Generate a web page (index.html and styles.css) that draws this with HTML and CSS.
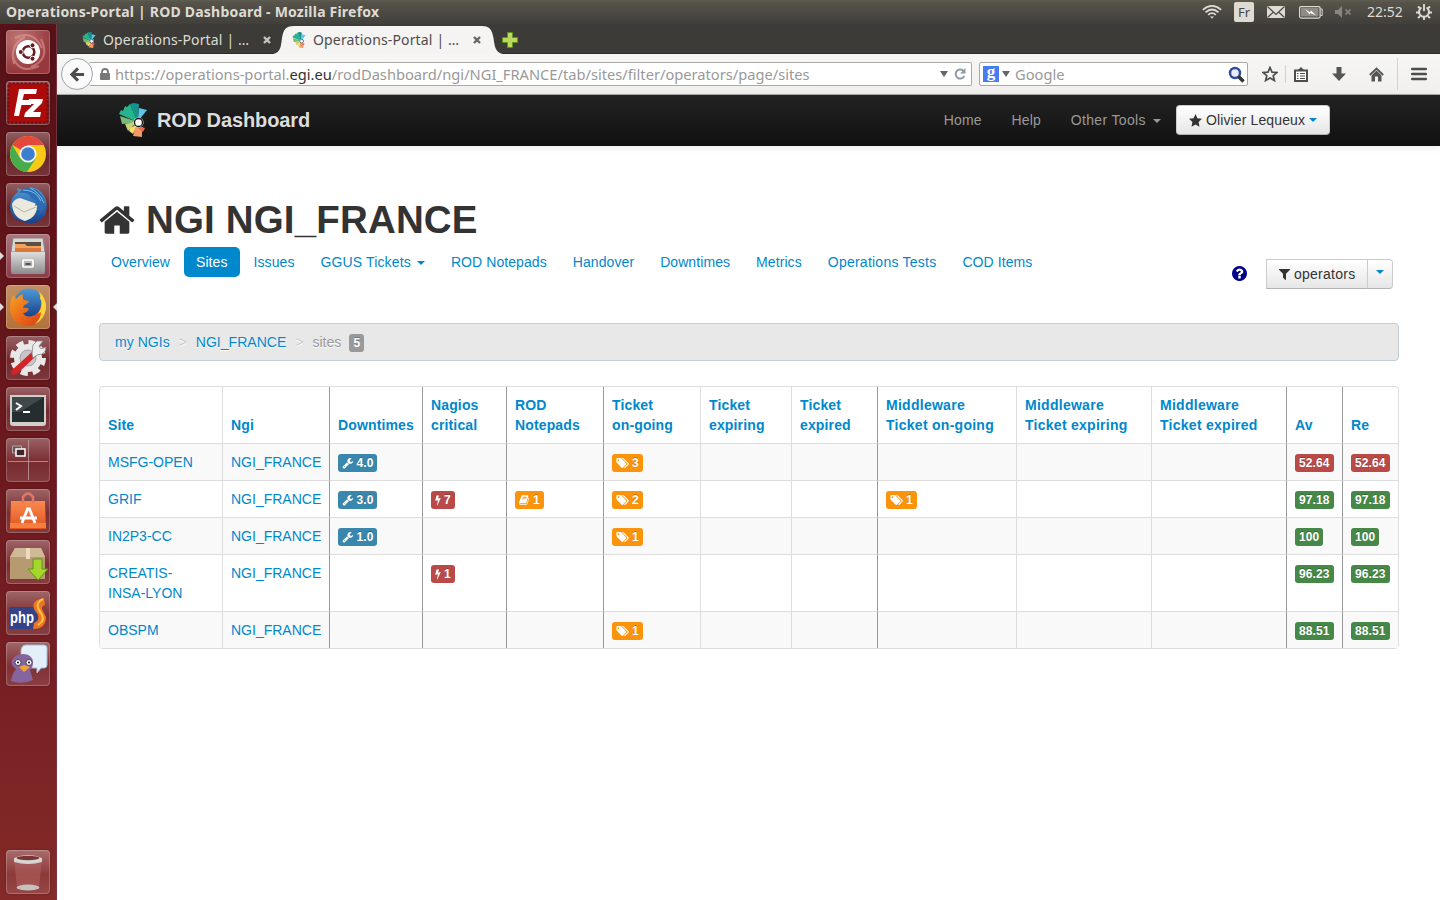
FILE: index.html
```html
<!DOCTYPE html>
<html lang="en">
<head>
<meta charset="utf-8">
<title>Operations-Portal | ROD Dashboard</title>
<link rel="stylesheet" href="styles.css">
</head>
<body>
<svg class="defs" aria-hidden="true">
  <symbol id="wrench" viewBox="0 0 1792 1792"><path d="M448 1472q0-26-19-45t-45-19-45 19-19 45 19 45 45 19 45-19 19-45zm644-420l-682 682q-37 37-90 37-52 0-91-37l-106-108q-38-36-38-90 0-53 38-91l681-681q39 98 114.5 173.5t173.5 114.5zm634-435q0 39-23 106-47 134-164.5 217.5t-258.5 83.5q-185 0-316.5-131.5t-131.5-316.5 131.5-316.5 316.5-131.5q58 0 121.5 16.5t107.5 46.5q16 11 16 28t-16 28l-293 169v224l193 107q5-3 79-48.5t135.5-81 70.5-35.5q15 0 23.5 10t8.5 25z"/></symbol>
  <symbol id="bolt" viewBox="400 0 1000 1792"><path d="M1333 566q18 20 7 44l-540 1157q-13 25-42 25-4 0-14-2-17-5-25.5-19t-4.5-30l197-808-406 101q-4 1-12 1-18 0-31-11-18-15-13-39l201-825q4-14 16-23t28-9h328q19 0 32 12.500t13 29.500q0 8-5 18l-171 463 396-98q8-2 12-2 19 0 34 15z"/></symbol>
  <symbol id="book" viewBox="0 0 1792 1792"><path d="M1639 478q40 57 18 129l-275 906q-19 64-76.500 107.500t-122.500 43.500h-923q-77 0-148.500-53.500t-99.500-131.500q-24-67-2-127 0-4 3-27t4-37q1-8-3-21.500t-3-19.500q2-11 8-21t16.500-23.500 16.500-23.500q23-38 45-91.500t30-91.500q3-10 .5-30t-.5-28q3-11 17-28t17-23q21-36 42-92t25-90q1-9-2.500-32t.5-28q4-13 22-30.500t22-22.500q19-26 42.500-84.500t27.500-96.500q1-8-3-25.500t-2-26.500q2-8 9-18t18-23 17-21q8-12 16.500-30.500t15-35 16-36 19.500-32 26.500-23.500 36-11.500 47.500 5.500l-1 3q38-9 51-9h761q74 0 114 56t18 130l-274 906q-36 119-71.500 153.500t-128.500 34.500h-869q-27 0-38 15-11 16-1 43 24 70 144 70h923q29 0 56-15.500t35-41.500l300-987q7-22 5-57 38 15 59 43zm-1064 2q-4 13 2 22.500t20 9.500h608q13 0 25.500-9.500t16.500-22.500l21-64q4-13-2-22.500t-20-9.500h-608q-13 0-25.500 9.500t-16.500 22.500zm-83 256q-4 13 2 22.500t20 9.500h608q13 0 25.500-9.500t16.500-22.500l21-64q4-13-2-22.500t-20-9.500h-608q-13 0-25.500 9.500t-16.500 22.500z"/></symbol>
  <symbol id="tags" viewBox="64 0 1984 1792"><path d="M576 448q0-53-37.500-90.500t-90.500-37.500-90.500 37.500-37.500 90.500 37.500 90.500 90.500 37.500 90.500-37.500 37.500-90.500zm1067 576q0 53-37 90l-491 492q-39 37-91 37-53 0-90-37l-715-716q-38-37-64.500-101t-26.500-117v-416q0-52 38-90t90-38h416q53 0 117 26.500t102 64.500l715 714q37 39 37 91zm384 0q0 53-37 90l-491 492q-39 37-91 37-36 0-59-14t-53-45l470-470q37-37 37-90 0-52-37-91l-715-714q-38-38-102-64.500t-117-26.500h224q53 0 117 26.500t102 64.500l715 714q37 39 37 91z"/></symbol>
  <symbol id="home" viewBox="64 200 1664 1400"><path d="M1472 992v480q0 26-19 45t-45 19h-384v-384h-256v384h-384q-26 0-45-19t-19-45v-480q0-1 .5-3t.5-3l575-474 575 474q1 2 1 6zm223-69l-62 74q-8 9-21 11h-3q-13 0-21-7l-692-577-692 577q-12 8-24 7-13-2-21-11l-62-74q-8-10-7-23.500t11-21.500l719-599q32-26 76-26t76 26l244 204v-195q0-14 9-23t23-9h192q14 0 23 9t9 23v408l219 182q10 8 11 21.500t-7 23.500z"/></symbol>
  <symbol id="help" viewBox="128 128 1536 1536"><path d="M1024 1376v-192q0-14-9-23t-23-9h-192q-14 0-23 9t-9 23v192q0 14 9 23t23 9h192q14 0 23-9t9-23zm256-672q0-88-55.500-163t-138.500-116-170-41q-243 0-371 213-15 24 8 42l132 100q7 6 19 6 16 0 25-12 53-68 86-92 34-24 86-24 48 0 85.500 26t37.500 59q0 38-20 61t-68 45q-63 28-115.500 86.500t-52.500 125.500v36q0 14 9 23t23 9h192q14 0 23-9t9-23q0-19 21.500-49.500t54.500-49.500q32-18 49-28.500t46-35 44.500-48 28-60.500 12.500-81zm384 192q0 209-103 385.500t-279.500 279.500-385.500 103-385.500-103-279.500-279.500-103-385.500 103-385.500 279.500-279.500 385.500-103 385.500 103 279.500 279.500 103 385.500z"/></symbol>
  <symbol id="filter" viewBox="190 250 1412 1420"><path d="M1595 295q17 41-14 70l-493 493v742q0 42-39 59-13 5-25 5-27 0-45-19l-256-256q-19-19-19-45v-486l-493-493q-31-29-14-70 17-39 59-39h1280q42 0 59 39z"/></symbol>
  <symbol id="egi" viewBox="0 0 28 34">
    <path fill="#25b48c" d="M18 19L0 11 2 7 4 8 6 3 8 4 11 1 17 15z"/>
    <path fill="#12958d" d="M11 1L15 0 20 1 19 16 17 16z"/>
    <path fill="#5cc6e4" d="M20 5L28 7 20 17 19 16z"/>
    <path fill="#79b77b" d="M1 13L16 18 16 20 3 21z"/>
    <path fill="#c5d376" d="M6 21L16 19 16 21 9 28z"/>
    <path fill="#f3dc68" d="M10 28L11 25 17 22 17 25 14 31z"/>
    <path fill="#f39a67" d="M14 33L17 23 23 27 23 34z"/>
    <path fill="#ef6a4c" d="M20 23L26 25 24 29 19 25z"/>
    <circle cx="19.500" cy="19.500" r="5" fill="#fff"/><circle cx="19.500" cy="19.500" r="4" fill="#fff" stroke="#111" stroke-width="1.300"/>
  </symbol>
  <linearGradient id="metal" x1="0" y1="0" x2="0" y2="1"><stop offset="0" stop-color="#ddd"/><stop offset="1" stop-color="#8c8c8c"/></linearGradient>
  <linearGradient id="flame" x1="0" y1="0" x2="1" y2="1"><stop offset="0" stop-color="#f6a421"/><stop offset=".5" stop-color="#ec6a1c"/><stop offset="1" stop-color="#d23a14"/></linearGradient>
  <linearGradient id="bird" x1="0" y1="0" x2="0" y2="1"><stop offset="0" stop-color="#4d9ad6"/><stop offset="1" stop-color="#173f88"/></linearGradient>
  <linearGradient id="bag" x1="0" y1="0" x2="0" y2="1"><stop offset="0" stop-color="#f98a50"/><stop offset="1" stop-color="#e2531c"/></linearGradient>
</svg>

<div class="desktop">
  <header class="panel">
    <span class="panel-title">Operations-Portal | ROD Dashboard - Mozilla Firefox</span>
    <div class="indicators">
      <svg width="20" height="14" viewBox="0 0 20 14" fill="none" stroke="#dfdbd2" stroke-width="1.700"><path d="M.8 4.800Q10-3 19.200 4.800M3.500 7.400Q10 1.600 16.500 7.400M6.200 9.900Q10 6.400 13.800 9.900"/><path d="M8 11.500h4l-2 2.300z" fill="#dfdbd2" stroke="none"/></svg>
      <span class="kbd">Fr</span>
      <svg class="mail" width="18" height="12" viewBox="0 0 18 12"><path fill="#dfdbd2" d="M0 0h18v12H0z"/><path d="M.5.500L9 8.500 17.500.500M.5 11.500L6.500 6M17.500 11.500L11.500 6" fill="none" stroke="#4a4842" stroke-width="1.200"/></svg>
      <svg class="batt" width="24" height="13" viewBox="0 0 24 13"><rect x=".6" y=".6" width="20.500" height="11.500" rx="1.500" fill="none" stroke="#dfdbd2" stroke-width="1.200"/><path fill="#8d8b84" d="M2 2h17.500v8.500H2z"/><path d="M21.500 3h1.700v6.500h-1.700" fill="none" stroke="#dfdbd2"/><path fill="#fff" d="M6 3l5 3.500 1-2 5 5-5.500-2.500-1 1.500z"/></svg>
      <svg class="snd" width="17" height="12" viewBox="0 0 17 12"><path fill="#88867f" d="M0 4h3l4-4v12L3 8H0z"/><path d="M10.500 3.500l5 5m0-5l-5 5" stroke="#88867f" stroke-width="1.700"/></svg>
      <span class="clock">22:52</span>
      <svg width="16" height="16" viewBox="0 0 16 16" fill="none" stroke="#dfdbd2"><path stroke-width="2" d="M5.500 3.500a5 5 0 1 0 5 0"/><path stroke-width="1.900" d="M8 0v7M2 2.500l2 1.700M14 2.500l-2 1.700M0 8.500h3M16 8.500h-3M2 14l2-1.700M14 14l-2-1.700M8 16v-3"/></svg>
    </div>
  </header>

  <div class="workspace">
    <nav class="launcher">
      <div class="tile ubuntu"><svg viewBox="0 0 44 44"><path d="M9 8Q27-1 36 18M35 9q10 20-10 28M33 36Q12 45 7 26M8 34Q3 15 19 7" fill="none" stroke="#e7a8a4" stroke-width="2" opacity=".5"/><circle cx="22" cy="22" r="12" fill="#fff"/><circle cx="22.500" cy="22" r="5.800" fill="none" stroke="#671d22" stroke-width="2.600"/><g fill="#671d22" stroke="#fff" stroke-width="1"><circle cx="14.800" cy="22" r="2.500"/><circle cx="26.500" cy="15.300" r="2.500"/><circle cx="26.500" cy="28.700" r="2.500"/></g></svg></div>
      <div class="tile"><svg viewBox="0 0 44 44"><rect x="2.500" y="2.500" width="39" height="39" fill="#ad0a0a" stroke="#7c0b0d" stroke-width="2" stroke-dasharray="2.500 1.500"/><path d="M8 35L13 8h18l-1 5H18l-1.500 6H26l-1 5h-9.500L13 35zM23 18h14l-1 4-9 9h8l-1 5H18l1-4 9-9h-6z" fill="#fff"/></svg></div>
      <div class="tile"><svg viewBox="0 0 44 44"><circle cx="22" cy="22" r="18" fill="#f8c916"/><path d="M22 22L6.400 13A18 18 0 0 1 37.600 13H22z" fill="#e4483c"/><path d="M6.400 13A18 18 0 0 0 21 40L29.800 26.500 14.200 26.500z" fill="#47ad4c"/><circle cx="22" cy="22" r="8.600" fill="#f4f4f4"/><circle cx="22" cy="22" r="6.800" fill="#3c7fd0"/></svg></div>
      <div class="tile"><svg viewBox="0 0 44 44"><path d="M12 9l-1-4 6 2q10-6 18 2 9 9 4 23-7 10-17 8Q5 38 4 24 5 13 12 9z" fill="url(#bird)"/><path d="M6 21q2-5 8-6l17 6q1 13-12 17Q7 35 6 21z" fill="#ece9df"/><path d="M8 23l10 6 12-5" fill="none" stroke="#b6b1a5"/><path d="M13 10q10-1 12 5l5 3-1 5 5-2-2 6 3 1-3 5q7-6 6-16-5-13-16-12-6 0-9 5z" fill="#2b6db5"/><path d="M17 7q13 0 18 11M24 5q9 4 14 15" fill="none" stroke="#80bbe5"/></svg></div>
      <div class="tile files"><span class="run"></span><svg viewBox="0 0 44 44"><path d="M7 4h30l2 14H5z" fill="#d7d7d4" stroke="#878784"/><path d="M9 8h26v10H9z" fill="#5a4e45"/><path d="M9 10h10l2 2h14v7H9z" fill="#f1a15d"/><path d="M9 14h26v5H9z" fill="#dc7837"/><path d="M5 18h34v20q0 2-2 2H7q-2 0-2-2z" fill="url(#metal)"/><rect x="17" y="26" width="10" height="7" rx="1" fill="none" stroke="#fff" stroke-width="1.700"/><path d="M19.500 29h5v2h-5z" fill="#555"/></svg></div>
      <div class="tile fox"><span class="run"></span><svg viewBox="0 0 44 44"><circle cx="23" cy="18" r="14.500" fill="url(#bird)"/><path d="M7 10l3 4q3-4 7-5-1 4 1 6l5 1q-1 3-5 4l-1 3q3-1 6 1-2 4-6 4 3 5 9 3 8-2 9-11 1-6-2-11l5 4 1 10q-2 17-17 18Q5 40 4 24 4 15 7 10z" fill="url(#flame)"/><path d="M32 6q9 7 8 18-2 11-11 15 6-6 6-12l-3 2q5-8 3-14l-1-1q1-4-2-8z" fill="#fbd43a"/></svg><span class="active"></span></div>
      <div class="tile"><svg viewBox="0 0 44 44"><circle cx="22" cy="22" r="15.500" fill="none" stroke="#e8e8e8" stroke-width="5" stroke-dasharray="7.200 4.973"/><circle cx="22" cy="22" r="11" fill="none" stroke="#e8e8e8" stroke-width="6"/><circle cx="22" cy="22" r="8" fill="#c6c6c8" stroke="#aaa"/><path d="M26 16L6 34q-2 4 1 5l4-1 19-18z" fill="#d3242a"/><path d="M26 18l1-9 4-4 6 0-4 5 2 3 5-2q0 5-4 7l-5 1-4 3z" fill="#eee" stroke="#888" stroke-width=".8"/></svg></div>
      <div class="tile"><svg viewBox="0 0 44 44"><path d="M4 8h36v28q0 3-3 3H7q-3 0-3-3z" fill="#cfcfcb"/><path d="M6 10h32v25H6z" fill="#252d2e"/><path d="M6 10h32L14 25H6z" fill="#414849"/><path d="M10 16l5 3-5 4M17 25h7" fill="none" stroke="#fff" stroke-width="2"/></svg></div>
      <div class="tile spaces"><svg viewBox="0 0 44 44"><path d="M22.500 2v40M2 23.500h40" stroke="#c29c9f" stroke-width=".8"/><path d="M6.500 8h9v7h-9z" fill="#715057" stroke="#aaa"/><path d="M10 11h9v7h-9z" fill="#3f242b" stroke="#fff" stroke-width="1.500"/></svg></div>
      <div class="tile"><svg viewBox="0 0 44 44"><path d="M5 12h34l1 28H4z" fill="url(#bag)"/><path d="M4 34h36v5H4z" fill="#f57d3e"/><path d="M17 14V8q5-7 10 0v6" fill="none" stroke="#de7966" stroke-width="2.500"/><path d="M16 34l5.500-14h2L29 34M14 29h17" fill="none" stroke="#fff" stroke-width="2.800"/></svg></div>
      <div class="tile"><svg viewBox="0 0 44 44"><path d="M4 17L9 8h26l4 9v22H4z" fill="#b69a70"/><path d="M4 17L9 8h26l4 9z" fill="#d0b996"/><path d="M20 8h4v11h-4z" fill="#eadbc1"/><path d="M27 19h9v10h6L32 40 22 29h5z" fill="#a4d62c" stroke="#5d9613"/></svg></div>
      <div class="tile"><svg viewBox="0 0 44 44"><path d="M3 16h28v22H3z" fill="#344287"/><path d="M38 7l-7 2q-5 3-3 9l4 6q2 5-4 8l-1 6q13 0 13-12l-3-6q-3-5 2-6z" fill="#f07522"/><path d="M37 8q-7 3-5 9l4 7q3 6-4 10" fill="none" stroke="#ffc047" stroke-width="2"/><text x="4" y="32" textLength="24" lengthAdjust="spacingAndGlyphs" class="php">php</text></svg></div>
      <div class="tile"><svg viewBox="0 0 44 44"><path d="M20 3h18q3 0 3 3v17q0 3-3 3h-3l-4 5v-5H21q-5 0-6-4V8q1-5 5-5z" fill="#e3f0f9" stroke="#9fc1dc"/><path d="M5 39q1-7 5-12-6-4-4-9 3-6 11-6 9 0 10 8 0 6-3 8l3 10q-11 5-22 1z" fill="#86649d"/><g fill="#fff" stroke="#503b66"><circle cx="12" cy="20.500" r="3"/><circle cx="23" cy="20.500" r="3"/></g><circle cx="12" cy="20.500" r="1"/><circle cx="23" cy="20.500" r="1"/><path d="M13 25l5-2 6 2-6 5z" fill="#f1a32a"/></svg></div>
      <div class="tile trash"><svg viewBox="0 0 44 44"><path d="M8 8h28l-3 30q-11 4-22 0z" fill="#b56666" opacity=".5"/><path d="M8 8q14-6 28 0v4q-14 4-28 0z" fill="#d6d5d2"/><ellipse cx="22" cy="8" rx="11.500" ry="2.200" fill="#793235"/><ellipse cx="22" cy="37.500" rx="11.500" ry="3" fill="#c5c2bf"/></svg></div>
    </nav>

    <section class="browser">
      <div class="tabs">
        <div class="tab"><svg class="fav"><use href="#egi"/></svg><span class="tab-label">Operations-Portal | …</span><svg class="close" viewBox="0 0 8 8"><path d="M1 1l6 6m0-6L1 7"/></svg></div>
        <div class="tab current"><svg class="tab-shape" viewBox="0 0 230 29"><path d="M0 29C8 28 8 20 9 13 10.500 5 12 1 21 1H209C217 1 219 5 220.500 13 221.500 20 222 28 230 29z" fill="#f5f4f2"/></svg><svg class="fav"><use href="#egi"/></svg><span class="tab-label">Operations-Portal | …</span><svg class="close" viewBox="0 0 8 8"><path d="M1 1l6 6m0-6L1 7"/></svg></div>
        <svg class="plus" viewBox="0 0 16 16"><path d="M5.500.500h5v5h5v5h-5v5h-5v-5h-5v-5h5z" fill="#bcd85a" stroke="#60901f"/></svg>
      </div>

      <div class="toolbar">
        <div class="back"><svg viewBox="0 0 16 16"><path d="M8.500 1.500L2 8l6.500 6.500M2.500 8H15" fill="none" stroke="#4d4d4d" stroke-width="3.200"/></svg></div>
        <div class="urlbar">
          <svg class="lock" viewBox="0 0 10 12"><path d="M2 6V4q0-3 3-3t3 3v2" fill="none" stroke="#777" stroke-width="1.800"/><rect y="5" width="10" height="7" rx="1" fill="#777"/></svg>
          <span class="url">https://operations-portal.<b>egi.eu</b>/rodDashboard/ngi/NGI_FRANCE/tab/sites/filter/operators/page/sites</span>
          <span class="tri"></span>
          <svg class="reload" viewBox="0 0 12 12"><path d="M9.500 3A4.500 4.500 0 1 0 10.300 8" fill="none" stroke="#8e9aa6" stroke-width="2"/><path d="M11.500 0v5.500H6z" fill="#8e9aa6"/></svg>
        </div>
        <div class="search"><span class="g">g</span><span class="tri"></span><span class="ph">Google</span>
          <svg viewBox="0 0 17 17"><circle cx="7" cy="7" r="5" fill="#e5eef9" stroke="#354a98" stroke-width="2.500"/><path d="M10.500 10.500l5 5" stroke="#333" stroke-width="3.500"/></svg></div>
        <div class="tools">
          <svg width="16" height="16" viewBox="0 0 16 16"><path d="M8 1.500l2 4.600 4.900.4-3.700 3.200 1.200 4.800L8 11.900l-4.400 2.600 1.200-4.800L1.100 6.500 6 6.100z" fill="none" stroke="#4d4d4d" stroke-width="1.700"/></svg>
          <i class="sep"></i>
          <svg width="14" height="15" viewBox="0 0 14 15"><path d="M1 3.500h12v10.500H1z" fill="#fff" stroke="#4d4d4d" stroke-width="2"/><path d="M4 3l3-3 3 3z" fill="#4d4d4d"/><path d="M3 6.500h1.500M6 6.500h5M3 9h1.500M6 9h5M3 11.500h1.500M6 11.500h5" stroke="#4d4d4d" stroke-width="1.100"/></svg>
          <svg width="14" height="14" viewBox="0 0 14 14"><path d="M4.500 0h5v6.500H14L7 14 0 6.500h4.500z" fill="#555"/></svg>
          <svg width="15" height="15" viewBox="0 0 15 15"><path d="M.8 8L7.500 1.500 14.200 8" fill="none" stroke="#555" stroke-width="1.800"/><path d="M2.500 8.500l5-5 5 5V14.500H9V9.500H6v5H2.500z" fill="#555"/></svg>
          <i class="sep long"></i>
          <svg width="16" height="14" viewBox="0 0 16 14"><path d="M1.200 2h13.600M1.200 7h13.600M1.200 12h13.600" stroke="#4d4d4d" stroke-width="2.600" stroke-linecap="round"/></svg>
        </div>
      </div>

      <div class="navbar">
        <svg class="logo"><use href="#egi"/></svg><span class="brand">ROD Dashboard</span>
        <div class="nav-right">
          <a>Home</a><a>Help</a><a>Other Tools <i class="caret"></i></a>
          <span class="btn user"><svg viewBox="0 0 13 13"><path d="M6.500 0l1.900 4.300 4.600.5-3.400 3.200.9 4.700-4-2.300-4 2.300.9-4.700L0 4.800l4.600-.5z"/></svg>Olivier Lequeux <i class="caret"></i></span>
        </div>
      </div>

      <main class="page">
        <h1><svg><use href="#home"/></svg>NGI NGI_FRANCE</h1>
        <div class="subnav">
          <ul class="pills"><li>Overview</li><li class="on">Sites</li><li>Issues</li><li class="drop">GGUS Tickets <i class="caret"></i></li><li>ROD Notepads</li><li>Handover</li><li>Downtimes</li><li>Metrics</li><li class="wide">Operations Tests</li><li>COD Items</li></ul>
          <div class="filters"><svg class="help"><use href="#help"/></svg><span class="btn ops"><svg><use href="#filter"/></svg>operators</span><span class="btn arrow"><i class="caret"></i></span></div>
        </div>
        <div class="crumbs"><a>my NGIs</a><i>&gt;</i><a>NGI_FRANCE</a><i>&gt;</i><span>sites</span><b class="badge gray">5</b></div>

        <table>
          <colgroup><col class="c1"><col class="c2"><col class="c3"><col class="c4"><col class="c5"><col class="c5"><col class="c7"><col class="c8"><col class="c9"><col class="c10"><col class="c10"><col class="c12"><col class="c12"></colgroup>
          <thead><tr><th>Site</th><th>Ngi</th><th class="d">Downtimes</th><th class="d">Nagios<br>critical</th><th class="d">ROD<br>Notepads</th><th class="d">Ticket<br>on-going</th><th>Ticket<br>expiring</th><th>Ticket<br>expired</th><th class="d mid">Middleware<br>Ticket on-going</th><th class="mid">Middleware<br>Ticket expiring</th><th class="mid">Middleware<br>Ticket expired</th><th class="d">Av</th><th class="d">Re</th></tr></thead>
          <tbody>
          <tr><td>MSFG-OPEN</td><td>NGI_FRANCE</td><td class="d"><b class="badge blue"><svg><use href="#wrench"/></svg>4.0</b></td><td class="d"></td><td class="d"></td><td class="d"><b class="badge orange tag"><svg><use href="#tags"/></svg>3</b></td><td></td><td></td><td class="d"></td><td></td><td></td><td class="d"><b class="badge red">52.64</b></td><td class="d"><b class="badge red">52.64</b></td></tr>
          <tr><td>GRIF</td><td>NGI_FRANCE</td><td class="d"><b class="badge blue"><svg><use href="#wrench"/></svg>3.0</b></td><td class="d"><b class="badge red bolt"><svg><use href="#bolt"/></svg>7</b></td><td class="d"><b class="badge orange note"><svg><use href="#book"/></svg>1</b></td><td class="d"><b class="badge orange tag"><svg><use href="#tags"/></svg>2</b></td><td></td><td></td><td class="d"><b class="badge orange tag"><svg><use href="#tags"/></svg>1</b></td><td></td><td></td><td class="d"><b class="badge green">97.18</b></td><td class="d"><b class="badge green">97.18</b></td></tr>
          <tr><td>IN2P3-CC</td><td>NGI_FRANCE</td><td class="d"><b class="badge blue"><svg><use href="#wrench"/></svg>1.0</b></td><td class="d"></td><td class="d"></td><td class="d"><b class="badge orange tag"><svg><use href="#tags"/></svg>1</b></td><td></td><td></td><td class="d"></td><td></td><td></td><td class="d"><b class="badge green">100</b></td><td class="d"><b class="badge green">100</b></td></tr>
          <tr><td>CREATIS-<br>INSA-LYON</td><td>NGI_FRANCE</td><td class="d"></td><td class="d"><b class="badge red bolt"><svg><use href="#bolt"/></svg>1</b></td><td class="d"></td><td class="d"></td><td></td><td></td><td class="d"></td><td></td><td></td><td class="d"><b class="badge green">96.23</b></td><td class="d"><b class="badge green">96.23</b></td></tr>
          <tr><td>OBSPM</td><td>NGI_FRANCE</td><td class="d"></td><td class="d"></td><td class="d"></td><td class="d"><b class="badge orange tag"><svg><use href="#tags"/></svg>1</b></td><td></td><td></td><td class="d"></td><td></td><td></td><td class="d"><b class="badge green">88.51</b></td><td class="d"><b class="badge green">88.51</b></td></tr>
          </tbody>
        </table>
      </main>
    </section>
  </div>
</div>
</body>
</html>
```
FILE: styles.css
```css
* { box-sizing: border-box; }
body { margin: 0; overflow: hidden; font: 14px/20px "Liberation Sans", Arial, sans-serif; color: #333; }
svg { display: block; flex: none; }
.defs { position: absolute; width: 0; height: 0; }
.desktop { width: 1440px; height: 900px; display: flex; flex-direction: column; background: #fff; }
.panel, .tabs, .toolbar { font-family: "Noto Sans", "Open Sans", sans-serif; white-space: nowrap; }

/* Top panel */
.panel { height: 24px; display: flex; align-items: center; justify-content: space-between; padding: 0 8px 0 6px; background: linear-gradient(#5f5c52, #56534a 10%, #403f3a); color: #dfdbd2; }
.panel-title { font-weight: 700; font-size: 14px; letter-spacing: 0.21px; }
.indicators { display: flex; align-items: center; }
.kbd { width: 20px; height: 20px; margin: 0 13px 0 12px; border-radius: 2px; background: #dfdbd2; color: #45443f; text-align: center; font-size: 13px; line-height: 21px; }
.batt { margin-left: 14px; }
.snd { margin-left: 12px; }
.clock { width: 38px; margin: 0 11px 0 15px; font-size: 14px; }

/* Launcher */
.workspace { flex: 1; display: flex; min-height: 0; }
.launcher { width: 57px; padding: 6px 0 6px 6px; display: flex; flex-direction: column; gap: 7px; background: linear-gradient(#551218, #611419 25%, #771f23 75%, #842a28); border-right: 1px solid #793640; }
.tile { position: relative; width: 44px; height: 44px; flex: none; border-radius: 4px; background: linear-gradient(rgba(255,255,255,.32), rgba(255,255,255,.08) 55%, rgba(255,255,255,.14)); box-shadow: inset 0 0 0 1px rgba(255,255,255,.22), 0 0 2px rgba(20,0,0,.4); }
.ubuntu { background: radial-gradient(circle at 30% 20%, #bf7775, #97393c 70%); }
.files { background: linear-gradient(#ae767f, #8a3a47); }
.fox { background: linear-gradient(#c19064, #b2713c); }
.trash { margin-top: auto; }
.run, .active { position: absolute; top: 18px; border: 4px solid transparent; }
.run { left: -6px; border-left-color: #ddd; border-right: 0; }
.active { right: -7px; border-right-color: #ddd; border-left: 0; }
.php { font: bold 17px "Liberation Sans", sans-serif; fill: #fff; }

/* Browser chrome */
.browser { flex: 1; display: flex; flex-direction: column; min-width: 0; }
.tabs { height: 30px; display: flex; background: #3c3b37; border-bottom: 1px solid #2c2b28; color: #dfdbd2; }
.tab { position: relative; width: 210px; height: 30px; flex: none; display: flex; align-items: center; padding: 2px 0 0 25px; }
.fav { width: 14px; height: 16px; margin-right: 7px; position: relative; }
.tab-label { width: 147px; flex: none; margin-right: 13px; font-size: 14px; letter-spacing: .15px; position: relative; }
.close { width: 8px; height: 8px; stroke: #c9c6be; stroke-width: 2.4; position: relative; }
.current { color: #4c4c4c; }
.current .close { stroke: #666; }
.tab-shape { position: absolute; left: 6px; top: 1px; width: 230px; height: 29px; }
.plus { width: 16px; height: 16px; margin: 8px 0 0 25px; }
.toolbar { height: 41px; display: flex; align-items: center; padding-left: 4px; background: linear-gradient(#f6f6f5, #f1f0ee); border-bottom: 1px solid #aaa; font-size: 14.67px; }
.back { width: 32px; height: 32px; border: 1px solid #9ba3ad; border-radius: 50%; background: #fafafa; display: grid; place-items: center; z-index: 1; }
.back svg { width: 15px; height: 15px; }
.urlbar { width: 883px; height: 24px; margin-left: -4px; padding-left: 11px; border: 1px solid #aaa9a4; border-left: 0; border-radius: 2px; background: #fff; display: flex; align-items: center; color: #999; }
.lock { width: 10px; height: 12px; margin-right: 5px; }
.url { width: 825px; }
.url b { font-weight: 400; color: #333; }
.tri { border: 4.500px solid transparent; border-top: 6px solid #666; border-bottom: 0; }
.reload { width: 12px; height: 12px; margin-left: 6px; }
.search { width: 269px; height: 24px; margin-left: 7px; padding: 0 2px 0 3px; border: 1px solid #aaa9a4; border-radius: 2px; background: #fff; display: flex; align-items: center; color: #999; }
.g { width: 16px; height: 16px; margin-right: 3px; background: #467df5; color: #fff; font: bold 17px/11px "Liberation Serif", serif; text-align: center; }
.ph { margin-left: 5px; flex: 1; }
.search svg { width: 17px; height: 17px; }
.tools { flex: 1; display: flex; align-items: center; padding-left: 14px; }
.tools > svg:nth-of-type(3) { margin-left: 24px; }
.tools > svg:nth-of-type(4) { margin-left: 23px; }
.sep { width: 1px; height: 18px; margin: 0 8px 0 7px; background: #ccd2d8; }
.long { height: 32px; margin: 0 13px; }

/* Site header */
.navbar { height: 51px; flex: none; display: flex; align-items: center; padding: 0 110px 1px 62px; background: linear-gradient(#222, #111); box-shadow: 0 1px 8px rgba(0,0,0,.1); color: #999; }
.logo { width: 28px; height: 34px; margin-right: 10px; }
.brand { font-size: 20px; font-weight: 700; letter-spacing: -.1px; color: #ddd; }
.nav-right { margin-left: auto; display: flex; align-items: center; }
.nav-right a { margin-right: 30px; white-space: nowrap; letter-spacing: .1px; }
.nav-right a:nth-of-type(3) { margin-right: 15px; letter-spacing: .33px; }
.nav-right a .caret { margin-left: 3px; }
.caret { display: inline-block; border: 4px solid transparent; border-top-color: currentColor; border-bottom: 0; vertical-align: middle; }
.btn { height: 30px; display: flex; align-items: center; border: 1px solid #ccc; border-bottom-color: #b3b3b3; background: linear-gradient(#fff, #e6e6e6); color: #333; white-space: nowrap; }
.btn .caret { color: #0088cc; }
.user { width: 154px; border-radius: 4px; padding-left: 12px; letter-spacing: .12px; }
.user svg { width: 13px; height: 13px; margin-right: 4px; fill: #333; }
.user .caret { margin-left: 4px; }

/* Content */
.page { padding: 54px 41px 0 42px; }
h1 { height: 40px; margin: 0; display: flex; align-items: center; font-size: 38.500px; line-height: 40px; letter-spacing: .16px; }
h1 svg { width: 36px; height: 30px; fill: #333; margin-right: 11px; margin-top: -1px; }
.subnav { display: flex; justify-content: space-between; height: 83px; padding-top: 7px; }
.pills { list-style: none; display: flex; gap: 2px; margin: 0; padding: 0; }
.pills li { height: 30px; padding: 5px 12px; border-radius: 5px; color: #0088cc; white-space: nowrap; letter-spacing: .08px; }
.pills .drop { letter-spacing: .14px; }
.pills .drop .caret { margin-left: 2px; }
.pills .wide { letter-spacing: .24px; }
.pills .on { background: #0088cc; color: #fff; }
.filters { display: flex; padding: 12px 6px 0 0; }
.filters .help { width: 15px; height: 15px; margin: 7px 19px 0 0; fill: #00008b; }
.ops { width: 102px; padding-left: 12px; letter-spacing: .25px; }
.ops svg { width: 11px; height: 11px; margin-right: 4px; fill: #333; }
.arrow { width: 25px; padding: 0 0 4px 8px; border-left: 0; border-radius: 0 4px 4px 0; }
.crumbs { height: 38px; display: flex; align-items: center; padding: 0 15px; background: #e8e8e8; border: 1px solid #c0cfd8; border-radius: 4px; color: #999; text-shadow: 0 1px 0 #fff; letter-spacing: .04px; }
.crumbs a { color: #0088cc; }
.crumbs i { width: 8px; margin: 0 9px; font-style: normal; color: #ccc; }
.crumbs .badge { margin-left: 8px; }
.badge { display: inline-flex; align-items: center; height: 18px; padding: 0 4px; border-radius: 3px; color: #fff; font-size: 12px; letter-spacing: .1px; line-height: 18px; text-shadow: 0 -1px 0 rgba(0,0,0,.25); vertical-align: top; margin-top: 2px; }
.badge svg { width: 11.500px; height: 12px; margin-right: 3px; fill: #fff; }
.badge.bolt svg { width: 6px; }
.badge.tag svg { width: 13px; }
.badge.note svg { width: 11px; }
.gray { background: #999; }
.blue { background: #3a87ad; }
.red { background: #b94a48; }
.orange { background: #fb940a; }
.green { background: #468847; }

table { width: 1300px; margin-top: 25px; table-layout: fixed; border: 1px solid #ddd; border-radius: 4px; border-spacing: 0; }
th, td { padding: 8px 0 8px 8px; text-align: left; color: #0088cc; vertical-align: top; border-left: 1px solid #ddd; white-space: nowrap; }
th { vertical-align: bottom; letter-spacing: .14px; }
.mid { letter-spacing: .27px; }
td { height: 37px; border-top: 1px solid #ddd; }
tr > :first-child { border-left: 0; }
tr > .d { border-left-color: #999; }
tbody tr:nth-child(odd) { background: #f9f9f9; }
td .badge { display: flex; width: fit-content; }
.c1 { width: 122px; } .c2 { width: 107px; } .c3 { width: 93px; } .c4 { width: 84px; } .c5 { width: 97px; } .c7 { width: 91px; } .c8 { width: 86px; } .c9 { width: 139px; } .c10 { width: 135px; } .c12 { width: 56px; }
```
